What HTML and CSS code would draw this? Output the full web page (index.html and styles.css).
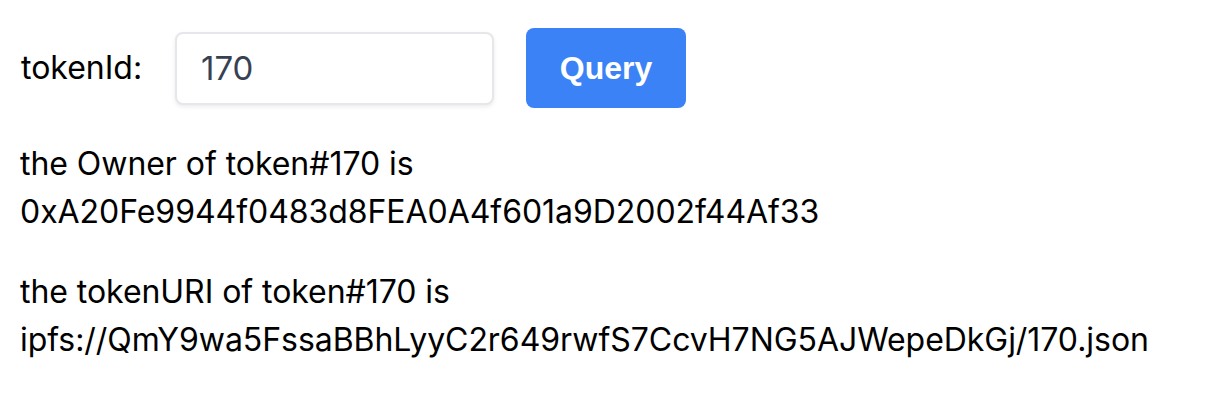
FILE: index.html
```html
<!DOCTYPE html>
<html lang="en">
<head>
<meta charset="utf-8">
<title>Token Query</title>
<link rel="stylesheet" href="styles.css">
</head>
<body>
<main class="page">
  <form class="query-row">
    <label class="label" for="tokenId">tokenId:</label>
    <input class="input" id="tokenId" type="text" value="170">
    <button class="btn" type="button">Query</button>
  </form>
  <p class="result">the Owner of token#170 is<br>0xA20Fe9944f0483d8FEA0A4f601a9D2002f44Af33</p>
  <p class="result">the tokenURI of token#170 is<br>ipfs://QmY9wa5FssaBBhLyyC2r649rwfS7CcvH7NG5AJWepeDkGj/170.json</p>
</main>
</body>
</html>
```
FILE: styles.css
```css
* { box-sizing: border-box; }
html, body { margin: 0; background: #fff; }
body { font-family: Inter, "Noto Sans", sans-serif; color: #000; }
.page { padding: 28px 20px; }
.query-row { display: flex; align-items: center; margin: 0; }
.label { font-size: 32px; line-height: 48px; width: 155px; padding-left: 1px; }
.input {
  width: 319px; height: 73px;
  margin-right: 32px;
  padding: 0 24px;
  font-family: Inter, "Noto Sans", sans-serif;
  font-size: 33px; color: #374151;
  border: 2px solid #e5e7eb; border-radius: 8px;
  box-shadow: 0 2px 4px rgba(0,0,0,0.08);
  outline: none; background: #fff;
}
.btn {
  width: 160px; height: 80px;
  background: #3b82f6; color: #fff;
  border: 0; border-radius: 8px;
  font-family: "Liberation Sans", Arial, sans-serif;
  font-weight: 700; font-size: 32px;
}
.result { margin: 32px 0 0; font-size: 32px; line-height: 48px; letter-spacing: -0.05px; }
```
